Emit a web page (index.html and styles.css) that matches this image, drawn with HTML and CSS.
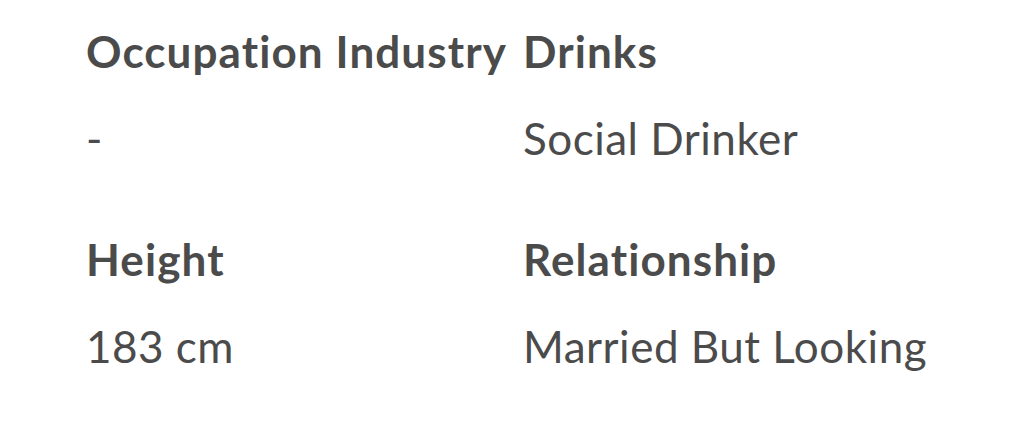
FILE: index.html
```html
<!DOCTYPE html>
<html>
<head>
<meta charset="utf-8">
<link rel="stylesheet" href="styles.css">
</head>
<body>
<div class="details">
  <div class="field">
    <div class="label">Occupation Industry</div>
    <div class="value">-</div>
  </div>
  <div class="field">
    <div class="label">Drinks</div>
    <div class="value">Social Drinker</div>
  </div>
  <div class="field">
    <div class="label">Height</div>
    <div class="value">183 cm</div>
  </div>
  <div class="field">
    <div class="label">Relationship</div>
    <div class="value">Married But Looking</div>
  </div>
</div>
</body>
</html>
```
FILE: styles.css
```css
html, body {
  margin: 0;
  background: #ffffff;
}
body {
  font-family: Lato, "Open Sans", sans-serif;
  color: #4b4b4b;
  font-variant-ligatures: none;
}
.details {
  display: grid;
  grid-template-columns: 437px 1fr;
  row-gap: 67px;
  padding: 24px 0 0 86px;
}
.field {
  display: flex;
  flex-direction: column;
  gap: 33px;
  white-space: nowrap;
}
.label {
  font-size: 44px;
  line-height: 54px;
  font-weight: 700;
  letter-spacing: 1.1px;
}
.value {
  font-size: 44px;
  line-height: 54px;
  font-weight: 400;
  letter-spacing: 0.5px;
}
```
